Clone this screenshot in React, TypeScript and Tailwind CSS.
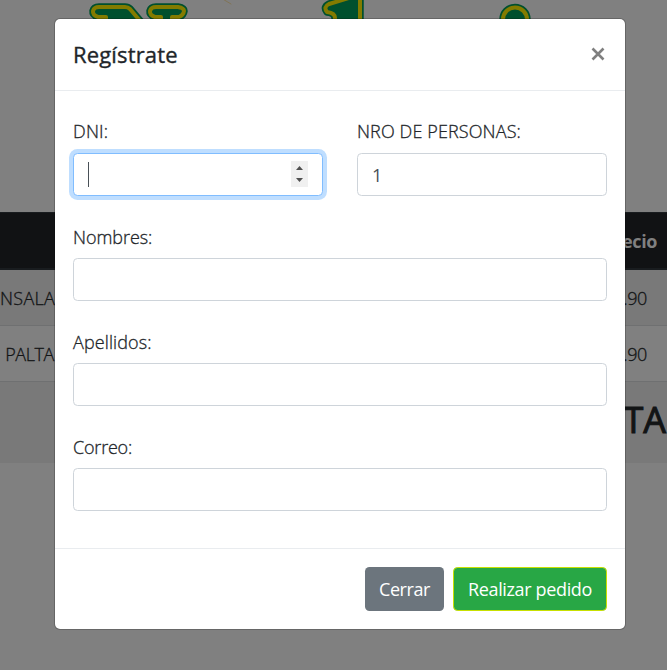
import React from "react";

const letterN = "M106 30 V17 H98 Q92.500 15 93 11 Q94 7 99 7 H125 Q128 7 130 9 L146 28";
const letterNRight = "M161 30 V17 H155 Q149.500 15 150 11 Q151 7 156 7 H178 Q184 8 184 11 Q183.500 15 179 17 H172 V30";
const letterL = "M352 -3 L329 4 Q323 7 327 12 Q335 13 335 18 V30 M360 -4 V30";

function Logo() {
  return (
    <svg className="block h-[212px] w-full" viewBox="0 0 667 212" fill="none" strokeLinejoin="round" strokeLinecap="round">
      <g stroke="#00502e" strokeWidth="7.500" fill="#00502e">
        <path d={letterN} />
        <path d={letterNRight} />
        <path d="M352 -3 L329 4 Q323 7 327 12 Q335 13 335 18 V30 H360 V-4Z" />
        <circle cx="515" cy="19.500" r="12" />
      </g>
      <g stroke="#837b00" strokeWidth="4">
        <path d={letterN} />
        <path d={letterNRight} />
        <path d={letterL} />
        <circle cx="515" cy="19.500" r="12" />
      </g>
      <path d="M221 -2 L231 4" stroke="#807456" strokeWidth="1" />
    </svg>
  );
}

const thin = "font-light [-webkit-text-stroke:0.3px_currentColor]";

function Row({ name, price, className }: { name: string; price: string; className: string }) {
  return (
    <div className={`flex h-[56px] items-center justify-between border-b border-[#6f7071] pt-[2px] pr-[20px] text-[18px] ${thin} ${className}`}>
      <span className="w-[54px] text-right whitespace-nowrap">{name}</span>
      <span className="tracking-[-0.4px]">{price}</span>
    </div>
  );
}

function Backdrop() {
  return (
    <div className="h-[670px] w-[667px] overflow-hidden bg-[#808080] text-[#121415]">
      <Logo />
      <div className="flex h-[58px] items-center justify-end border-t border-b-2 border-[#191c1f] bg-[#111214] pt-[2px] pr-[10px] text-[18px] font-bold text-[#808080]">
        <span className="tracking-[-0.4px]">Precio</span>
      </div>
      <Row name="NSALA" price=".90" className="bg-[#797979] tracking-[0.3px]" />
      <Row name="PALTA" price=".90" className="tracking-[-0.4px]" />
      <div className="flex h-[81px] items-center justify-end bg-[#797979] pr-px pb-[5px] text-[36px] [-webkit-text-stroke:1px_currentColor]">
        <span>TA</span>
      </div>
    </div>
  );
}

const inputBase = "block h-[43px] w-full rounded-[4.5px] border bg-white";
const labelBase = `block h-[33px] text-[18px] ${thin}`;

function TextField({ label, tracking }: { label: string; tracking: string }) {
  return (
    <label className="block h-[105px]">
      <span className={`${labelBase} leading-[25px] ${tracking}`}>{label}</span>
      <input type="text" className={`${inputBase} border-[#ced4da] px-[14px] text-[18px] outline-none`} />
    </label>
  );
}

function Modal() {
  return (
    <div className="absolute top-[18px] left-[54px] flex h-[612px] w-[572px] flex-col rounded-[6px] border border-black/20 bg-white bg-clip-padding text-[#212529]">
      <div className="flex h-[72px] shrink-0 items-center justify-between border-b border-[#e9ecef] pr-[20px] pl-[18px]">
        <h5 className="text-[22px] tracking-[0.15px] [-webkit-text-stroke:0.35px_currentColor]">Regístrate</h5>
        <svg className="mt-[-2px] size-[14px]" viewBox="0 0 14 14" stroke="#7f7f7f" strokeWidth="2.600">
          <path d="M1.500 1.500 L12.500 12.500 M12.500 1.500 L1.500 12.500" />
        </svg>
      </div>
      <div className="flex-1 px-[18px] pt-[29px]">
        <div className="flex h-[105px] gap-[34px]">
          <div className="w-[250px]">
            <span className={`${labelBase} leading-[23px] tracking-[0.2px]`}>DNI:</span>
            <div className={`${inputBase} flex items-center justify-between border-[#80bdff] pr-[14px] pl-[14px] ring-4 ring-[#bfdeff]`}>
              <span className="h-[25px] w-px bg-[#495057]" />
              <span className="mt-[-1px] flex h-[26px] w-[17px] flex-col items-center justify-between bg-[#f0f0f0] py-[5px]">
                <svg className="h-[4px] w-[7px]" viewBox="0 0 7 4" fill="#505050"><path d="M0 4 L3.500 0 L7 4Z" /></svg>
                <svg className="h-[4px] w-[7px]" viewBox="0 0 7 4" fill="#505050"><path d="M0 0 L3.500 4 L7 0Z" /></svg>
              </span>
            </div>
          </div>
          <div className="w-[250px]">
            <span className={`${labelBase} leading-[23px] tracking-[0.12px]`}>NRO DE PERSONAS:</span>
            <div className={`${inputBase} border-[#ced4da] px-[14px] text-[18px] leading-[43px] text-[#495057]`}>1</div>
          </div>
        </div>
        <TextField label="Nombres:" tracking="tracking-[-0.05px]" />
        <TextField label="Apellidos:" tracking="tracking-[0.1px]" />
        <TextField label="Correo:" tracking="tracking-[-0.2px]" />
      </div>
      <div className="flex h-[81px] shrink-0 items-center justify-end gap-[9px] border-t border-[#e9ecef] pr-[18px] text-[18px] text-white">
        <button className="h-[44px] w-[79px] rounded-[4.5px] bg-[#6c757d] tracking-[-0.45px]">Cerrar</button>
        <button className="h-[44px] w-[154px] rounded-[4.5px] border border-[#c8e000] bg-[#28a745] tracking-[-0.35px]">Realizar pedido</button>
      </div>
    </div>
  );
}

export default function App() {
  return (
    <div className="relative h-[670px] w-[667px] overflow-hidden font-['Open_Sans','Noto_Sans',sans-serif]">
      <Backdrop />
      <Modal />
    </div>
  );
}
